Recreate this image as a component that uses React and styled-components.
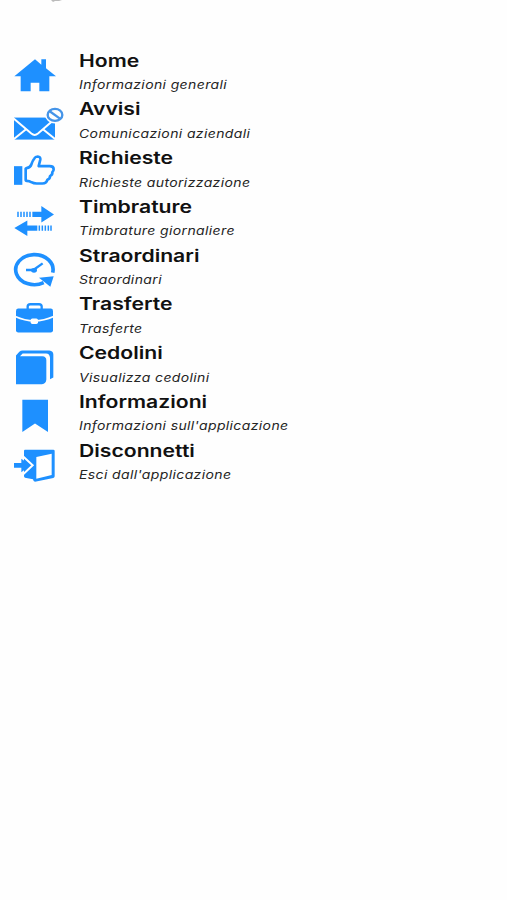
import styled, { createGlobalStyle } from 'styled-components'

const GlobalStyle = createGlobalStyle`
  body {
    margin: 0;
    background: #fefefe;
    font-family: Inter, 'Liberation Sans', sans-serif;
  }
`

const Page = styled.main`
  min-height: 900px;
  box-sizing: border-box;
  overflow: hidden;
`

const TopEdge = styled.div`
  height: 50.5px;
  padding-left: 51px;
  box-sizing: border-box;

  svg {
    display: block;
  }
`

const Menu = styled.nav`
  display: flex;
  flex-direction: column;
`

const Item = styled.a`
  display: flex;
  height: 48.75px;
  color: #111;
  text-decoration: none;
  cursor: pointer;
`

const Icon = styled.svg`
  flex: none;
  width: 66px;
  height: 48.75px;
  margin-right: 13px;
  fill: #1e90ff;
  overflow: visible;
`

const Labels = styled.div`
  display: flex;
  flex-direction: column;
  align-items: flex-start;
`

const Title = styled.span`
  font-size: 17px;
  font-weight: 600;
  line-height: 20.5px;
  white-space: nowrap;
  transform: scaleX(1.245);
  transform-origin: left;
`

const Subtitle = styled.span`
  margin-top: 5px;
  font-size: 11.6px;
  font-style: italic;
  line-height: 18px;
  letter-spacing: 0.3px;
  color: #252525;
  white-space: nowrap;
  transform: scaleX(1.21);
  transform-origin: left;
`

const HomeIcon = () => (
  <Icon viewBox="0 151 198 146.25">
    <path d="M43 227 105 176 124 192V176H138V203L168 227H148V272H118V246H92V272H62V227Z" />
  </Icon>
)

const MailIcon = () => (
  <Icon viewBox="0 12.25 198 146.25">
    <rect x="42" y="68" width="123" height="66" />
    <path d="M40 70 94 116Q104 124 114 116L167 70M40 134 79 102M167 134 128 102" fill="none" stroke="#fff" strokeWidth="6" />
    <ellipse cx="165" cy="60" rx="30" ry="26" fill="#fefefe" />
    <ellipse cx="165" cy="60" rx="22" ry="18" fill="none" stroke="#4594e8" strokeWidth="7" />
    <path d="M149 49 181 72" stroke="#4594e8" strokeWidth="7" />
  </Icon>
)

const ThumbIcon = () => (
  <Icon viewBox="0 158.5 198 146.25">
    <rect x="42" y="213" width="25" height="56" />
    <path
      d="M77 223Q76 220 80 219Q91 217 94 208Q98 196 103 190Q106 184 113 184Q122 185 121 193L116 213H149Q161 213 161 222Q161 227 157 231Q158 239 150 243Q150 251 142 254Q140 265 127 265H110Q101 265 94 261Q89 257 80 257Q77 257 77 253Z"
      fill="none"
      stroke="#1e90ff"
      strokeWidth="8"
      strokeLinejoin="round"
    />
  </Icon>
)

const ArrowsIcon = () => (
  <Icon viewBox="0 19.75 198 146.25">
    <path d="M97 64H124V47L162 72 124 96V80H97ZM112 105H82V90L43 113 82 137V121H112Z" />
    <path d="M54 64V80M63 64V80M72 64V80M81 64V80M90 64V80M118 105V121M127 105V121M136 105V121M145 105V121M153 105V121" stroke="#1e90ff" strokeWidth="4.5" />
  </Icon>
)

const ClockIcon = () => (
  <Icon viewBox="0 166 198 146.25">
    <path d="M158 246A56 45 0 1 0 131 276" fill="none" stroke="#1e90ff" strokeWidth="11" />
    <path d="M117 261 161 257 151 288Z" />
    <path d="M78 238H100L128 218" fill="none" stroke="#1e90ff" strokeWidth="7" />
    <ellipse cx="102" cy="239" rx="9" ry="7" />
  </Icon>
)

const BriefcaseIcon = () => (
  <Icon viewBox="0 12.25 198 146.25">
    <path d="M83 60V50Q83 43 91 43H117Q125 43 125 50V60" fill="none" stroke="#1e90ff" strokeWidth="7" />
    <rect x="48" y="56" width="111" height="72" rx="7" />
    <path d="M46 80Q74 93 103 93T161 80" fill="none" stroke="#fff" strokeWidth="5" />
    <rect x="92" y="86" width="22" height="16" rx="5" fill="#fff" />
  </Icon>
)

const BooksIcon = () => (
  <Icon viewBox="0 158.5 198 146.25">
    <path d="M48 282V196L58 185Q62 181 68 181H148Q160 182 160 193V262L150 267V203Q149 190 138 190H68L60 198H127Q139 199 139 210V268Q138 281 126 282Z" />
  </Icon>
)

const BookmarkIcon = () => (
  <Icon viewBox="0 19.75 198 146.25">
    <path d="M67 43H144V140L105 114 67 140Z" />
  </Icon>
)

const ExitIcon = () => (
  <Icon viewBox="0 166 198 146.25">
    <path d="M75 192H160Q164 192 164 196V272Q164 276 160 277L105 288Q100 288 99 281L75 276Q72 275 72 272V196Q72 192 75 192Z" />
    <path d="M109 214 155 204V268L109 279Z" fill="#fff" />
    <path d="M68 211 98 239 68 267" fill="none" stroke="#fff" strokeWidth="6" />
    <path d="M42 232H64V219L91 239 64 260V246H42Z" />
  </Icon>
)

const items = [
  { icon: HomeIcon, title: 'Home', subtitle: 'Informazioni generali' },
  { icon: MailIcon, title: 'Avvisi', subtitle: 'Comunicazioni aziendali' },
  { icon: ThumbIcon, title: 'Richieste', subtitle: 'Richieste autorizzazione' },
  { icon: ArrowsIcon, title: 'Timbrature', subtitle: 'Timbrature giornaliere' },
  { icon: ClockIcon, title: 'Straordinari', subtitle: 'Straordinari' },
  { icon: BriefcaseIcon, title: 'Trasferte', subtitle: 'Trasferte' },
  { icon: BooksIcon, title: 'Cedolini', subtitle: 'Visualizza cedolini' },
  { icon: BookmarkIcon, title: 'Informazioni', subtitle: "Informazioni sull'applicazione" },
  { icon: ExitIcon, title: 'Disconnetti', subtitle: "Esci dall'applicazione" },
]

function App() {
  return (
    <>
      <GlobalStyle />
      <Page>
        <TopEdge>
          <svg width="11" height="2" viewBox="0 0 11 2" aria-hidden="true">
            <path d="M0 0H11L8 1H4L2 2Z" fill="#bbb" />
          </svg>
        </TopEdge>
        <Menu>
          {items.map(({ icon: ItemIcon, title, subtitle }) => (
            <Item key={title}>
              <ItemIcon />
              <Labels>
                <Title>{title}</Title>
                <Subtitle>{subtitle}</Subtitle>
              </Labels>
            </Item>
          ))}
        </Menu>
      </Page>
    </>
  )
}

export default App
